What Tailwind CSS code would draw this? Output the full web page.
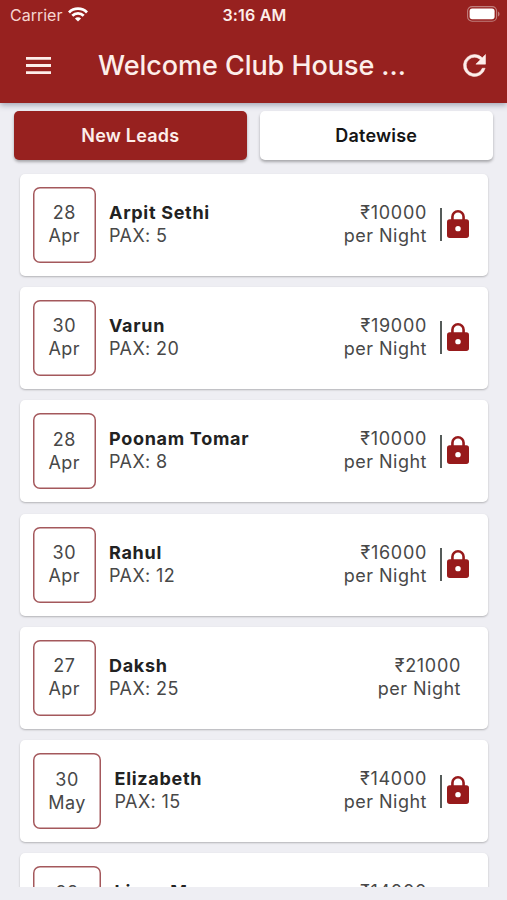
<!DOCTYPE html>
<html lang="en">
<head>
<meta charset="UTF-8">
<title>Welcome Club House</title>
<script src="https://cdn.jsdelivr.net/npm/@tailwindcss/browser@4"></script>
</head>
<body class="bg-[#eeeef3] font-['Inter','Noto_Sans',sans-serif] h-[900px] overflow-hidden flex flex-col">
<header class="bg-[#97211f] text-[#fdeeea] h-[103px] shrink-0 relative z-10 shadow-[0_2px_6px_rgba(40,50,80,0.4)]">
  <div class="h-[29px] pl-[10px] pr-[8px] grid grid-cols-3 items-center">
    <div class="flex items-center gap-[7px] text-[16px] text-[#f6d5d0]">
      <span class="w-[51px]">Carrier</span>
      <svg class="w-[20px] h-[15px]" viewBox="0 0 20 15" fill="none" stroke="#fff" stroke-width="2.8">
        <path d="M1 5.4a12.7 12.7 0 0 1 18 0"/>
        <path d="M4.3 8.8a8.1 8.1 0 0 1 11.4 0"/>
        <path d="M10 14.6l-3.1-3.1a4.4 4.4 0 0 1 6.2 0z" fill="#fff" stroke="none"/>
      </svg>
    </div>
    <p class="text-center text-[16px] font-semibold tracking-[0.2px]">3:16 AM</p>
    <svg class="w-[33px] h-[16px] justify-self-end -mr-[1px] -mt-[1px]" viewBox="0 0 33 16">
      <rect x=".6" y=".6" width="29" height="14.6" rx="4.5" fill="none" stroke="#c07e7c" stroke-width="1.1"/>
      <rect x="2.6" y="2.6" width="25" height="10.6" rx="2.6" fill="#fff"/>
      <path d="M31 5.5v5c2-.8 2-4.2 0-5z" fill="#c07e7c"/>
    </svg>
  </div>
  <div class="h-[74px] pl-[26px] pr-[22px] flex items-center">
    <svg class="w-[25px] h-[17px] -mt-[2px]" viewBox="0 0 25 17" fill="#fdeeea">
      <path d="M0 0h25v2.8H0zM0 7.1h25v2.8H0zM0 14.2h25V17H0z"/>
    </svg>
    <h1 class="ml-[47px] text-[27px] font-medium tracking-[-0.05px] whitespace-nowrap">Welcome Club House ...</h1>
    <svg class="w-[33px] h-[33px] ml-auto -mr-[6px] -mt-[1px]" viewBox="0 0 24 24" fill="#fdeeea" stroke="#fdeeea" stroke-width=".4">
      <path d="M17.65 6.35A7.96 7.96 0 0 0 12 4a8 8 0 1 0 7.73 10h-2.08A6 6 0 1 1 12 6c1.66 0 3.14.69 4.22 1.78L13 11h7V4z"/>
    </svg>
  </div>
</header>
<nav class="flex gap-[13px] px-[14px] pt-[8px] shrink-0 text-[18px] font-semibold tracking-[0.2px]">
  <button class="w-[233px] h-[49px] rounded-[5px] bg-[#97211f] text-[#fdeeea] pb-[1px] shadow-[0_2px_3px_rgba(0,0,0,0.3)]">New Leads</button>
  <button class="w-[234px] h-[49px] rounded-[5px] bg-white text-[#151515] pb-[1px] shadow-[0_2px_3px_rgba(0,0,0,0.3)]">Datewise</button>
</nav>
<main id="leads" class="ml-[15px] mr-[14px] px-[5px] pt-[13.7px] h-[727px] overflow-hidden flex flex-col gap-[11.3px]"></main>
<script>
const leads = [
  { day: '28', month: 'Apr', name: 'Arpit Sethi', pax: 5, price: 10000, locked: true },
  { day: '30', month: 'Apr', name: 'Varun', pax: 20, price: 19000, locked: true },
  { day: '28', month: 'Apr', name: 'Poonam Tomar', pax: 8, price: 10000, locked: true },
  { day: '30', month: 'Apr', name: 'Rahul', pax: 12, price: 16000, locked: true },
  { day: '27', month: 'Apr', name: 'Daksh', pax: 25, price: 21000, locked: false },
  { day: '30', month: 'May', name: 'Elizabeth', pax: 15, price: 14000, locked: true },
  { day: '28', month: 'May', name: 'Lison M', pax: 10, price: 14000, locked: true }
];

const lock = `
  <div class="w-[2px] h-[33px] bg-[#555b59] ml-[13px]"></div>
  <svg class="w-[22px] h-[28px] ml-[5px] mb-[2px]" viewBox="4 1 16 21" preserveAspectRatio="none" fill="#971a1b">
    <path d="M18 8h-1V6A5 5 0 0 0 7 6v2H6a2 2 0 0 0-2 2v10a2 2 0 0 0 2 2h12a2 2 0 0 0 2-2V10a2 2 0 0 0-2-2zm-6 9a2 2 0 1 1 0-4 2 2 0 0 1 0 4zm3.1-9H8.9V6a3.1 3.1 0 0 1 6.2 0z"/>
  </svg>`;

document.getElementById('leads').innerHTML = leads.map(l => `
  <div class="h-[102px] shrink-0 bg-white rounded-[5px] shadow-[0_1px_2px_rgba(0,0,0,0.25)] px-[13px] flex items-center text-[18px] leading-[23px] tracking-[0.4px] text-[#484848]">
    <div class="${l.month === 'May' ? 'w-[68px]' : 'w-[62.5px]'} h-[76px] shadow-[inset_0_0_0_1.5px_#a4585c] rounded-[7px] pt-[14.5px] text-center">
      <p>${l.day}</p>
      <p>${l.month}</p>
    </div>
    <div class="ml-[13.5px] pb-[2px]">
      <p class="font-bold text-[#222] tracking-[0.7px]">${l.name}</p>
      <p>PAX: ${l.pax}</p>
    </div>
    <div class="ml-auto pb-[2px] text-right ${l.locked ? '' : 'mr-[14px]'}">
      <p class="tracking-[0.7px]">₹${l.price}</p>
      <p class="tracking-[0.5px]">per Night</p>
    </div>
    ${l.locked ? lock + '<div class="w-[6px]"></div>' : ''}
  </div>`).join('');
</script>
</body>
</html>
